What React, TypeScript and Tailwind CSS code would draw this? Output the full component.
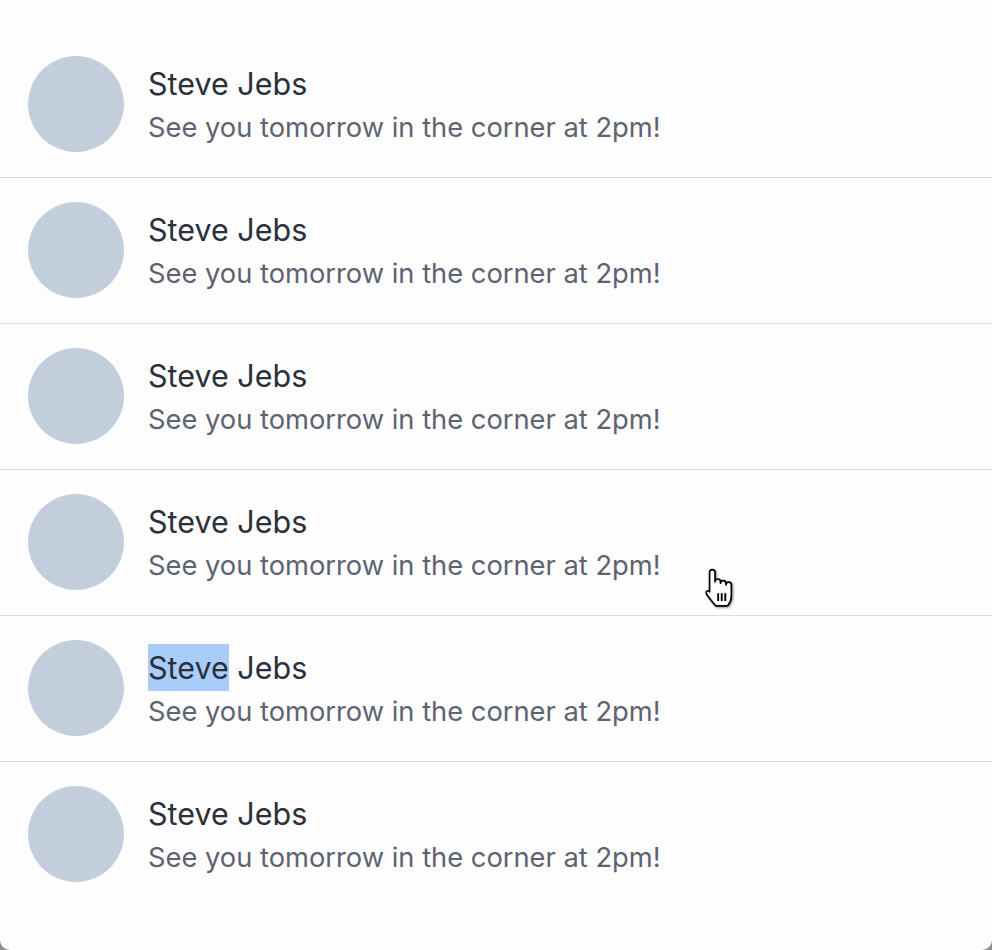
import React from "react";

function Row({ selected, last }: { selected?: boolean; last?: boolean }) {
  return (
    <div
      className={
        "flex items-center gap-[24px] pl-[28px] pt-[24px] pb-[25px] " +
        (last ? "" : "border-b border-[#dcdcdf]")
      }
    >
      <div className="w-[96px] h-[96px] rounded-full bg-[#c3cedc] shrink-0" />
      <div className="flex flex-col">
        <div className="text-[30.5px] leading-[47px] text-[#2b303b] whitespace-nowrap">
          {selected ? (
            <span className="inline-block align-top bg-[#a8cdfb] leading-[47px]">Steve</span>
          ) : (
            "Steve"
          )}{" "}
          Jebs
        </div>
        <div className="text-[27.3px] leading-[41px] text-[#5e6372] whitespace-nowrap">
          See you tomorrow in the corner at 2pm!
        </div>
      </div>
    </div>
  );
}

function HandCursor() {
  return (
    <svg
      width="38"
      height="44"
      viewBox="0 0 36 42"
      className="absolute left-[700px] top-[566px]"
      style={{ filter: "drop-shadow(1px 1.5px 1px rgba(0,0,0,0.45))" }}
    >
      <path
        d="M9 6 a2.6 2.6 0 0 1 5.2 0 V15 a2.6 2.6 0 0 1 5.2 0 V16.5 a2.6 2.6 0 0 1 5.2 0 V18 a2.6 2.6 0 0 1 5.2 0 V29 c0 3.5 -1.6 6.5 -3.6 9 H15 c-2.5 -2.5 -6 -7 -8.5 -10.5 c-1.4 -2 -0.6 -4.2 1.4 -3.8 c0.6 0.1 1 0.5 1.1 1.1 Z"
        fill="#fff"
        stroke="#000"
        strokeWidth="1.6"
        strokeLinejoin="round"
      />
      <path d="M17.2 26 V33.5 M20.6 26 V33.5 M24 26 V33.5" stroke="#000" strokeWidth="1.8" />
    </svg>
  );
}

export default function App() {
  return (
    <div className="bg-[#8d8d8d] w-[992px] h-[950px]" style={{ fontFamily: "Inter, 'Noto Sans', sans-serif" }}>
      <div className="relative bg-[#fdfdfd] w-[992px] h-[950px] rounded-b-[10px] pt-[32px]">
        <Row />
        <Row />
        <Row />
        <Row />
        <Row selected />
        <Row last />
        <HandCursor />
      </div>
    </div>
  );
}
